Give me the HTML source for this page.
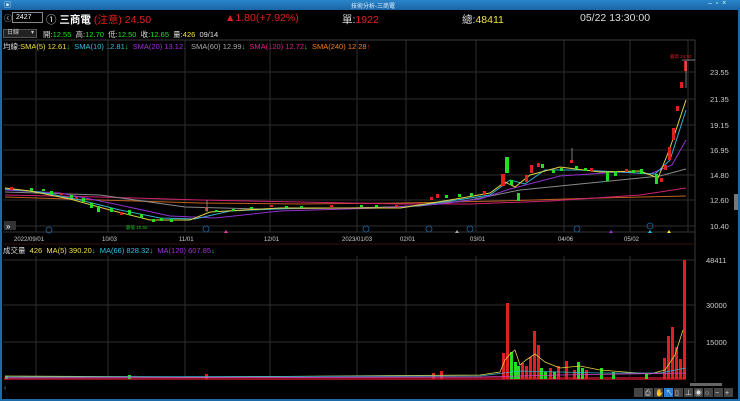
<!DOCTYPE html>
<html><head><meta charset="utf-8"><style>
body{margin:0;background:#000;width:740px;height:401px;overflow:hidden;font-family:"Liberation Sans","Noto Sans CJK TC",sans-serif;}
.t{position:absolute;white-space:nowrap;}
</style></head><body>
<div style="position:absolute;left:0;top:0;width:740px;height:401px;background:#000;border:2px solid #1c6aa8;border-top:none;box-sizing:border-box"></div>
<div style="position:absolute;left:0;top:0;width:740px;height:10px;background:linear-gradient(#2b86c9,#1a64a6)"></div>
<div class="t" style="left:351px;top:1px;font-size:6px;color:#dfefff">技術分析-三商電</div>
<div class="t" style="left:4px;top:0px;font-size:7px;color:#fff">▣</div>
<div class="t" style="left:708px;top:0px;font-size:7px;color:#cfe">–&nbsp;&nbsp;▫&nbsp;&nbsp;×</div>

<div class="t" style="left:4px;top:13px;font-size:8px;color:#ccc">ⓒ</div>
<div style="position:absolute;left:12px;top:12px;width:31px;height:11px;border:1px solid #888;box-sizing:border-box;color:#fff;font-size:7px;line-height:9px;padding-left:3px">2427</div>
<div class="t" style="left:46px;top:12px;font-size:10.5px;color:#ddd">① <b style="color:#fff">三商電</b> <span style="color:#e02020">(注意) 24.50</span></div>
<div class="t" style="left:225px;top:12px;font-size:10.5px;color:#e02020">▲1.80(+7.92%)</div>
<div class="t" style="left:342px;top:12px;font-size:10.5px;color:#ddd">單:<span style="color:#e02020">1922</span></div>
<div class="t" style="left:462px;top:12px;font-size:10.5px;color:#ddd">總:<span style="color:#f0e040">48411</span></div>
<div class="t" style="left:580px;top:12px;font-size:10.5px;color:#ddd">05/22 13:30:00</div>

<div style="position:absolute;left:3px;top:29px;width:34px;height:9px;background:#222;border:1px solid #555;box-sizing:border-box;color:#ccc;font-size:6px;line-height:7px;padding-left:3px">日線 <span style="float:right;padding-right:2px">▾</span></div>
<div class="t" style="left:43px;top:29px;font-size:7.5px;color:#ddd">開:<span style="color:#20e020">12.55</span>&nbsp; 高:<span style="color:#20e020">12.70</span>&nbsp; 低:<span style="color:#20e020">12.50</span>&nbsp; 收:<span style="color:#20e020">12.65</span>&nbsp; 量:<span style="color:#f0e040">426</span>&nbsp; 09/14</div>
<div class="t" style="left:3px;top:41px;font-size:7.5px;color:#ddd">均線:<span style="color:#f0e040">SMA(5) 12.61</span><span style="color:#20e020">↓</span> &nbsp;<span style="color:#30c0e0">SMA(10) 12.81</span><span style="color:#20e020">↓</span> &nbsp;<span style="color:#a030e0">SMA(20) 13.12</span><span style="color:#20e020">↓</span> &nbsp;<span style="color:#aaa">SMA(60) 12.99</span><span style="color:#20e020">↓</span> &nbsp;<span style="color:#e0208a">SMA(120) 12.72</span><span style="color:#20e020">↓</span> &nbsp;<span style="color:#f08020">SMA(240) 12.28</span><span style="color:#e02020">↑</span></div>

<svg style="position:absolute;left:0;top:0" width="740" height="401">
<g stroke="#2e2e2e" stroke-width="1" fill="none">
<path d="M36 40V232M108 40V232M185 40V232M270 40V232M357 40V232M406 40V232M476 40V232M564 40V232M630 40V232M688 40V232"/>
<path d="M3 72H695M3 99H695M3 125H695M3 150H695M3 175H695M3 200H695M3 226H695"/>
<path d="M36 256V380M108 256V380M185 256V380M270 256V380M357 256V380M406 256V380M476 256V380M564 256V380M630 256V380"/>
<path d="M3 260H695M3 305H695M3 342H695"/>
</g>
<path d="M695 40V382M3 40H695" stroke="#3a3a3a"/>
<path d="M3 232H695" stroke="#333"/>
<path d="M3 244H695" stroke="#3a1010"/>
<g fill="none" stroke-width="1">
<path d="M5 197 L100 200 L200 203 L300 204 L400 203 L500 201 L600 198 L686 196" stroke="#c06020"/>
<path d="M5 195 L100 197 L200 200 L300 202 L400 204 L470 204 L550 201 L640 195 L686 188" stroke="#d02070"/>
<path d="M5 192 L100 195 L185 207 L260 209 L350 208 L420 206 L470 200 L520 190 L600 182 L660 176 L686 169" stroke="#888"/>
<path d="M5 190 L60 193 L110 203 L170 216 L215 218 L280 211 L380 208 L440 204 L480 199 L510 189 L560 176 L620 172 L650 174 L672 165 L686 140" stroke="#9030d0"/>
<path d="M5 189 L40 192 L80 200 L120 210 L160 218 L195 219 L230 211 L300 208 L400 208 L450 201 L490 195 L510 180 L525 184 L545 170 L580 170 L620 172 L655 174 L670 160 L686 110" stroke="#30b0d0"/>
<path d="M5 188 L30 191 L70 199 L110 210 L150 220 L190 220 L210 212 L280 208 L400 208 L450 200 L490 193 L505 182 L515 187 L530 175 L560 167 L600 172 L640 171 L658 178 L670 148 L686 100" stroke="#e0d040"/>
</g>
<g fill="#20e020">
<rect x="30" y="188" width="3" height="3"/><rect x="42" y="189" width="3" height="2"/><rect x="50" y="191" width="3" height="3"/><rect x="70" y="195" width="3" height="3"/><rect x="82" y="198" width="3" height="4"/><rect x="90" y="203" width="3" height="5"/><rect x="97" y="206" width="3" height="6"/><rect x="110" y="208" width="3" height="4"/><rect x="128" y="210" width="3" height="5"/><rect x="140" y="214" width="3" height="4"/><rect x="152" y="219" width="3" height="3"/><rect x="160" y="218" width="3" height="3"/><rect x="170" y="219" width="3" height="3"/><rect x="215" y="210" width="3" height="2"/><rect x="232" y="209" width="3" height="2"/><rect x="250" y="207" width="3" height="2"/><rect x="285" y="206" width="3" height="2"/><rect x="300" y="206" width="3" height="2"/><rect x="360" y="205" width="3" height="2"/><rect x="375" y="205" width="3" height="2"/><rect x="445" y="195" width="3" height="3"/><rect x="458" y="194" width="3" height="3"/><rect x="470" y="193" width="3" height="3"/><rect x="505" y="157" width="4" height="16"/><rect x="510" y="180" width="3" height="5"/><rect x="517" y="193" width="3" height="8"/><rect x="541" y="164" width="3" height="4"/><rect x="552" y="170" width="3" height="3"/><rect x="560" y="168" width="3" height="3"/><rect x="575" y="166" width="3" height="3"/><rect x="584" y="168" width="3" height="3"/><rect x="606" y="172" width="3" height="9"/><rect x="614" y="171" width="3" height="5"/><rect x="632" y="170" width="3" height="3"/><rect x="640" y="169" width="3" height="5"/><rect x="655" y="174" width="3" height="10"/>
</g>
<g fill="#e02020">
<rect x="10" y="187" width="3" height="3"/><rect x="60" y="193" width="3" height="2"/><rect x="75" y="197" width="3" height="2"/><rect x="120" y="212" width="3" height="3"/><rect x="205" y="207" width="3" height="4"/><rect x="270" y="205" width="3" height="2"/><rect x="330" y="205" width="3" height="2"/><rect x="395" y="205" width="3" height="2"/><rect x="430" y="197" width="3" height="3"/><rect x="436" y="194" width="3" height="4"/><rect x="483" y="191" width="3" height="4"/><rect x="501" y="174" width="4" height="12"/><rect x="525" y="175" width="3" height="7"/><rect x="530" y="165" width="3" height="8"/><rect x="537" y="163" width="3" height="4"/><rect x="570" y="160" width="3" height="3"/><rect x="590" y="168" width="3" height="3"/><rect x="625" y="169" width="3" height="3"/><rect x="660" y="178" width="3" height="4"/><rect x="664" y="165" width="3" height="5"/><rect x="668" y="147" width="3" height="13"/><rect x="672" y="128" width="3" height="12"/><rect x="676" y="106" width="3" height="5"/><rect x="680" y="82" width="3" height="6"/><rect x="684" y="61" width="3" height="10"/>
</g>
<path d="M572 148V160M686 61V88M207 200V212M682 60H695" stroke="#aaa" stroke-width="0.7"/>
<text x="670" y="58" fill="#e02020" font-size="4.5">最高 24.50</text>
<text x="126" y="229" fill="#20c020" font-size="4.5">最低 10.55</text>
<g fill="#ccc" font-size="7.5">
<text x="710" y="75">23.55</text><text x="710" y="102">21.35</text><text x="710" y="128">19.15</text><text x="710" y="153">16.95</text><text x="710" y="178">14.80</text><text x="710" y="203">12.60</text><text x="710" y="229">10.40</text>
<text x="706" y="263">48411</text><text x="706" y="308">30000</text><text x="706" y="345">15000</text>
</g>
<rect x="734" y="194" width="4" height="16" fill="#777"/>
<g fill="none" stroke="#1c6aa8" stroke-width="0.8">
<circle cx="49" cy="230" r="3"/><circle cx="206" cy="229" r="3"/><circle cx="366" cy="229" r="3"/><circle cx="429" cy="229" r="3"/><circle cx="470" cy="229" r="3"/><circle cx="577" cy="229" r="3"/><circle cx="650" cy="226" r="3"/>
</g>
<path d="M224 233l2-3 2 3z" fill="#e040a0"/><path d="M455 233l2-3 2 3z" fill="#aaa"/><path d="M609 233l2-3 2 3z" fill="#a030e0"/><path d="M648 233l2-3 2 3z" fill="#30c0e0"/><path d="M667 233l2-3 2 3z" fill="#f0e040"/>
<rect x="4" y="221" width="12" height="9" fill="#333"/><text x="6" y="229" fill="#fff" font-size="8">»</text>
<g fill="#ccc" font-size="6">
<text x="14" y="241">2022/09/01</text><text x="102" y="241">10/03</text><text x="179" y="241">11/01</text><text x="264" y="241">12/01</text><text x="342" y="241">2023/01/03</text><text x="400" y="241">02/01</text><text x="470" y="241">03/01</text><text x="558" y="241">04/06</text><text x="624" y="241">05/02</text>
</g>
<text x="3" y="253" font-size="7.5" fill="#ddd">成交量 <tspan fill="#f0e040">&#160;426 &#160;MA(5) 390.20</tspan><tspan fill="#20e020">↓</tspan> <tspan fill="#30c0e0">&#160;MA(66) 828.32</tspan><tspan fill="#20e020">↓</tspan> <tspan fill="#a030e0">&#160;MA(120) 607.85</tspan><tspan fill="#20e020">↓</tspan></text>
<rect x="4" y="377" width="682" height="3" fill="#8a1020"/>
<g fill="#e02020">
<rect x="205" y="374" width="3" height="5"/><rect x="432" y="373" width="3" height="6"/><rect x="440" y="371" width="3" height="8"/><rect x="502" y="353" width="3" height="26"/><rect x="506" y="303" width="3" height="76"/><rect x="521" y="363" width="3" height="16"/><rect x="525" y="366" width="3" height="13"/><rect x="529" y="357" width="3" height="22"/><rect x="533" y="331" width="3" height="48"/><rect x="537" y="345" width="3" height="34"/><rect x="549" y="368" width="3" height="11"/><rect x="557" y="366" width="3" height="13"/><rect x="565" y="361" width="3" height="18"/><rect x="573" y="370" width="3" height="9"/><rect x="585" y="370" width="3" height="9"/><rect x="663" y="358" width="3" height="21"/><rect x="667" y="336" width="3" height="43"/><rect x="671" y="327" width="3" height="52"/><rect x="675" y="347" width="3" height="32"/><rect x="679" y="359" width="3" height="20"/><rect x="683" y="260" width="3" height="119"/>
</g>
<g fill="#20e020">
<rect x="5" y="376" width="3" height="3"/><rect x="128" y="375" width="3" height="4"/><rect x="510" y="352" width="3" height="27"/><rect x="514" y="362" width="3" height="17"/><rect x="517" y="366" width="3" height="13"/><rect x="540" y="368" width="3" height="11"/><rect x="544" y="372" width="3" height="7"/><rect x="553" y="372" width="3" height="7"/><rect x="577" y="362" width="3" height="17"/><rect x="581" y="368" width="3" height="11"/><rect x="600" y="368" width="3" height="11"/><rect x="612" y="372" width="3" height="7"/><rect x="645" y="374" width="3" height="5"/>
</g>
<g fill="none" stroke-width="0.8">
<path d="M5 376 L200 377 L480 375 L500 372 L505 360 L510 354 L515 350 L520 365 L526 360 L535 354 L545 362 L560 368 L580 366 L600 370 L650 374 L665 370 L675 355 L683 330" stroke="#e0d040"/>
<path d="M5 377 L480 376 L520 371 L600 373 L660 373 L686 368" stroke="#30b0d0"/>
<path d="M5 378 L480 377 L560 375 L686 373" stroke="#d040c0"/>
</g>
<text x="4" y="390" fill="#888" font-size="7">‹</text>
<rect x="690" y="383" width="32" height="3" fill="#666"/>
<g fill="#444"><rect x="634" y="388" width="9" height="9"/><rect x="644" y="388" width="9" height="9"/><rect x="654" y="388" width="9" height="9"/><rect x="674" y="388" width="9" height="9"/><rect x="684" y="388" width="9" height="9"/><rect x="694" y="388" width="9" height="9"/><rect x="704" y="388" width="9" height="9"/><rect x="714" y="388" width="9" height="9"/><rect x="724" y="388" width="9" height="9"/></g>
<rect x="664" y="388" width="9" height="9" fill="#2a7fd0"/>
<g fill="#ddd" font-size="7"><text x="645" y="395">⎙</text><text x="655" y="395">✋</text><text x="666" y="395">↖</text><text x="675" y="395">▯</text><text x="685" y="395">⊥</text><text x="695" y="395">◉</text><text x="705" y="395">○</text><text x="715" y="395">−</text><text x="725" y="395">+</text></g>
</svg>
</body></html>
